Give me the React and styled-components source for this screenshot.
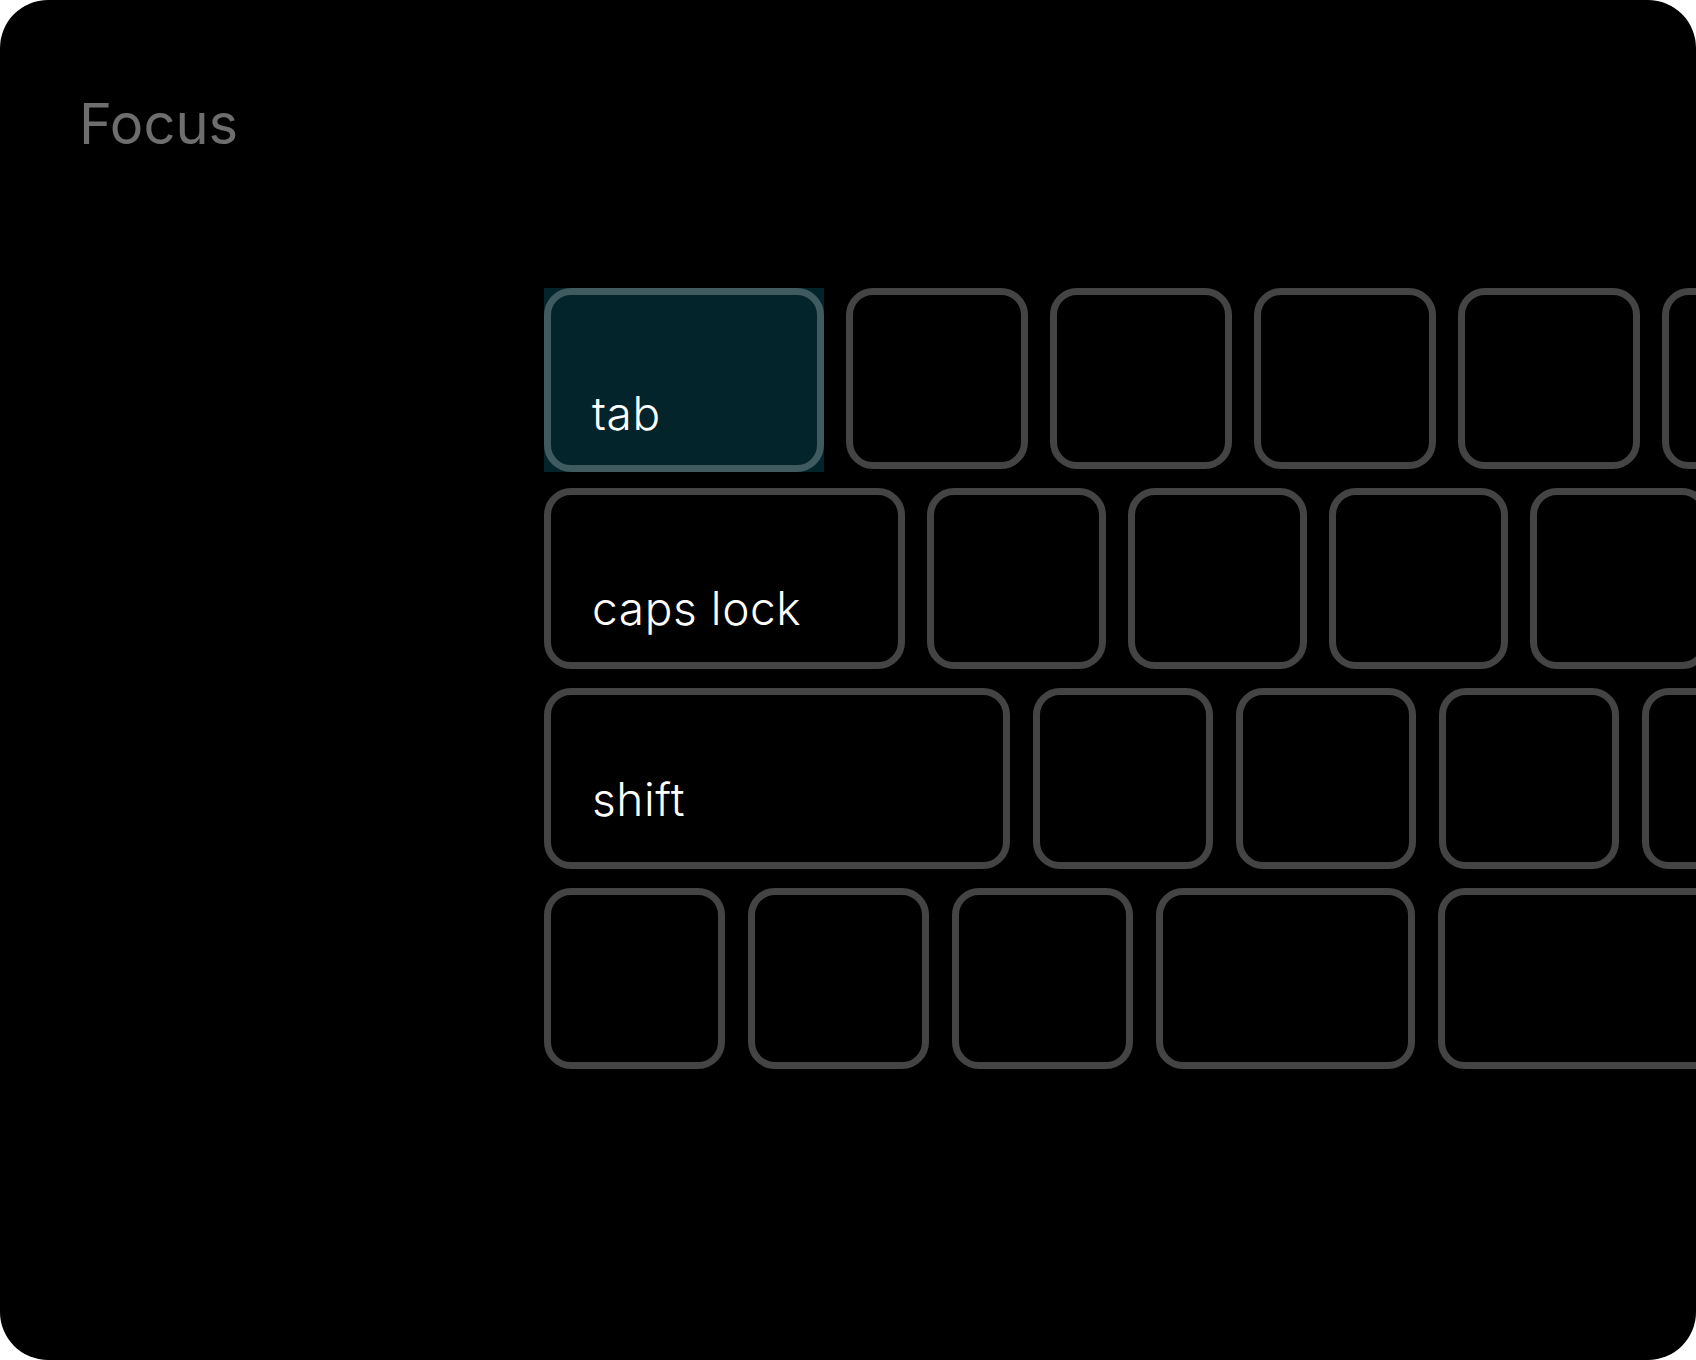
import React from "react";
import styled, { createGlobalStyle } from "styled-components";

const Global = createGlobalStyle`
  html, body { margin: 0; padding: 0; background: #ffffff; }
  #root { width: 1696px; height: 1360px; }
`;

const Card = styled.div`
  width: 1696px;
  height: 1360px;
  box-sizing: border-box;
  background: #000000;
  border-radius: 48px;
  overflow: hidden;
  padding: 90px 0 0 79px;
  font-family: Inter, "Noto Sans", sans-serif;
`;

const Title = styled.h1`
  margin: 0;
  font-size: 56px;
  font-weight: 400;
  line-height: normal;
  color: #6e6e6e;
`;

const Keyboard = styled.div`
  display: flex;
  flex-direction: column;
  gap: 19px;
  margin: 130px 0 0 465px;
`;

const Row = styled.div`
  display: flex;
  align-items: flex-start;
  height: 181px;
  gap: ${(p) => p.$gap}px;
`;

const Key = styled.div`
  flex: 0 0 auto;
  box-sizing: border-box;
  width: ${(p) => p.$w}px;
  height: ${(p) => p.$h || 181}px;
  border: 7px solid ${(p) => (p.$focused ? "#3f5b5f" : "#444444")};
  border-radius: 27px;
  background: ${(p) => (p.$focused ? "#03242a" : "#000000")};
  padding: ${(p) => p.$lift || 0}px 0 0 41px;
`;

const FocusRing = styled.div`
  flex: 0 0 auto;
  background: #03242a;
  display: flex;
`;

const Label = styled.span`
  display: block;
  font-family: Inter, "Noto Sans", sans-serif;
  font-size: 46px;
  font-weight: 300;
  letter-spacing: 0.6px;
  line-height: 46px;
  color: #ffffff;
  white-space: nowrap;
`;

const rows = [
  { gap: 22, keys: [{ w: 280, h: 184, label: "tab", focused: true, lift: 95 }, { w: 182 }, { w: 182 }, { w: 182 }, { w: 182 }, { w: 182 }] },
  { gap: 22, keys: [{ w: 361, label: "caps lock", lift: 90 }, { w: 179 }, { w: 179 }, { w: 179 }, { w: 179 }] },
  { gap: 23, keys: [{ w: 466, label: "shift", lift: 81 }, { w: 180 }, { w: 180 }, { w: 180 }, { w: 180 }] },
  { gap: 23, keys: [{ w: 181 }, { w: 181 }, { w: 181 }, { w: 259 }, { w: 300 }] },
];

function KeyCap({ k }) {
  const key = (
    <Key $w={k.w} $h={k.h} $focused={k.focused} $lift={k.lift}>
      {k.label && <Label>{k.label}</Label>}
    </Key>
  );
  return k.focused ? <FocusRing>{key}</FocusRing> : key;
}

export default function App() {
  return (
    <>
      <Global />
      <Card>
        <Title>Focus</Title>
        <Keyboard>
          {rows.map((r, i) => (
            <Row key={i} $gap={r.gap}>
              {r.keys.map((k, j) => (
                <KeyCap key={j} k={k} />
              ))}
            </Row>
          ))}
        </Keyboard>
      </Card>
    </>
  );
}
